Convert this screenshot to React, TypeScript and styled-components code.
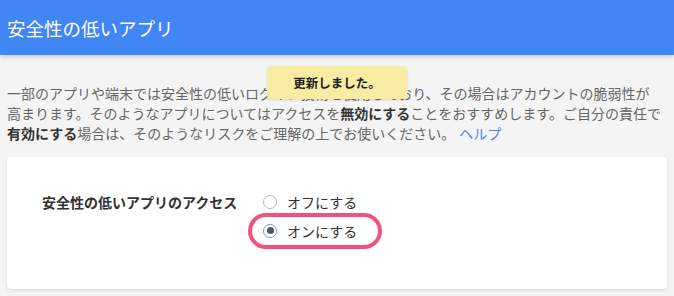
import styled, { createGlobalStyle } from "styled-components";

const GlobalStyle = createGlobalStyle`
  html, body {
    margin: 0;
    padding: 0;
    background: #f4f4f4;
  }
  body {
    font-family: "Noto Sans CJK JP", "Noto Sans", sans-serif;
  }
`;

const Page = styled.div`
  position: relative;
  width: 674px;
  min-height: 296px;
  background: #f4f4f4;
`;

const Header = styled.header`
  position: relative;
  height: 55px;
  display: flex;
  align-items: center;
  padding-left: 7px;
  background: #4285f4;
  color: #fff;
  font-size: 18.5px;
  box-shadow: 0 2px 4px rgba(0, 0, 0, 0.18);
`;

const Main = styled.main`
  padding: 28px 7px 0;
`;

const Description = styled.p`
  margin: 0;
  font-size: 14px;
  line-height: 20px;
  color: #666;
  white-space: nowrap;
`;

const Strong = styled.b`
  font-weight: 700;
  color: #333;
`;

const HelpLink = styled.a`
  color: #4285f4;
  text-decoration: none;
  margin-left: 4px;
`;

const Toast = styled.div`
  position: absolute;
  left: 267px;
  top: 66px;
  width: 140px;
  height: 33px;
  display: flex;
  align-items: center;
  justify-content: center;
  background: #f8eca2;
  border-radius: 4px;
  box-shadow: 0 1px 3px rgba(0, 0, 0, 0.12);
  font-size: 12.5px;
  font-weight: 700;
  color: #222;
`;

const Card = styled.section`
  margin-top: 14px;
  height: 132px;
  box-sizing: border-box;
  padding: 30px 0 0 35px;
  background: #fff;
  border-radius: 4px;
  box-shadow: 0 1px 3px rgba(0, 0, 0, 0.12);
  display: grid;
  grid-template-columns: 221px 1fr;
  align-items: start;
`;

const FieldLabel = styled.div`
  height: 29px;
  display: flex;
  align-items: center;
  font-size: 14px;
  font-weight: 700;
  color: #333;
`;

const RadioGroup = styled.div`
  display: flex;
  flex-direction: column;
`;

const Option = styled.label<{ $highlight?: boolean }>`
  position: relative;
  height: 29px;
  display: flex;
  align-items: center;
  gap: 10px;
  font-size: 14px;
  color: #333;
  width: max-content;
`;

const Circle = styled.span<{ $checked?: boolean }>`
  width: 14px;
  height: 14px;
  box-sizing: border-box;
  border-radius: 50%;
  border: 1px solid ${({ $checked }) => ($checked ? "#5b9cf5" : "#b8b8b8")};
  background: #fff;
  display: flex;
  align-items: center;
  justify-content: center;

  &::after {
    content: "";
    display: ${({ $checked }) => ($checked ? "block" : "none")};
    width: 7px;
    height: 7px;
    border-radius: 50%;
    background: #555;
  }
`;

const Ring = styled.span`
  position: absolute;
  left: -15px;
  top: -3px;
  width: 134px;
  height: 36px;
  box-sizing: border-box;
  border: 4px solid #f0527c;
  border-radius: 18px;
  pointer-events: none;
`;

export default function App() {
  return (
    <Page>
      <GlobalStyle />
      <Header>安全性の低いアプリ</Header>
      <Main>
        <Description>
          一部のアプリや端末では安全性の低いログイン技術を使用しており、その場合はアカウントの脆弱性が
          <br />
          高まります。そのようなアプリについてはアクセスを<Strong>無効にする</Strong>
          ことをおすすめします。ご自分の責任で
          <br />
          <Strong>有効にする</Strong>場合は、そのようなリスクをご理解の上でお使いください。
          <HelpLink href="#">ヘルプ</HelpLink>
        </Description>
        <Card>
          <FieldLabel>安全性の低いアプリのアクセス</FieldLabel>
          <RadioGroup>
            <Option>
              <Circle />
              オフにする
            </Option>
            <Option $highlight>
              <Circle $checked />
              オンにする
              <Ring />
            </Option>
          </RadioGroup>
        </Card>
      </Main>
      <Toast>更新しました。</Toast>
    </Page>
  );
}
